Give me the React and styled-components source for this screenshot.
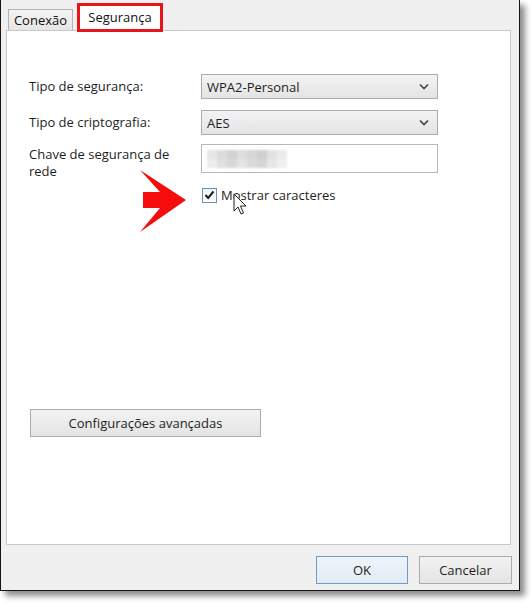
import React from "react";
import styled, { createGlobalStyle } from "styled-components";

const GlobalStyle = createGlobalStyle`
  html, body {
    margin: 0;
    padding: 0;
    background: #ffffff;
  }
  body {
    font-family: "Open Sans", "Noto Sans", sans-serif;
    font-size: 13px;
    color: #1e1e1e;
  }
`;

// --- Styled Components ---

const Page = styled.div`
  position: relative;
  width: 531px;
  height: 604px;
  overflow: hidden;
  background: #ffffff;
`;

const Window = styled.div`
  width: 518px;
  height: 590px;
  background: #f0f0f0;
  border: 1px solid #151515;
  border-top: none;
  box-shadow: 5px 5px 6px rgba(0, 0, 0, 0.45);
  display: flex;
  flex-direction: column;
`;

const TabStrip = styled.div`
  height: 30px;
  display: flex;
  align-items: flex-end;
  padding-left: 7px;
  gap: 4px;
`;

const Tab = styled.div`
  position: relative;
  z-index: 1;
  box-sizing: border-box;
  display: flex;
  align-items: center;
  justify-content: center;
  height: ${(p) => (p.$active ? "29px" : "21px")};
  width: ${(p) => (p.$active ? "86px" : "65px")};
  margin-bottom: ${(p) => (p.$active ? "-2px" : "0")};
  padding-top: ${(p) => (p.$active ? "0" : "1px")};
  background: ${(p) => (p.$active ? "#ffffff" : "linear-gradient(#f3f3f3, #e6e6e6)")};
  border: ${(p) => (p.$active ? "3px solid #e8141c" : "1px solid #b4b4b4")};
  border-bottom: ${(p) => (p.$active ? "3px solid #e8141c" : "none")};
  color: #111;
  font-size: 13px;
  line-height: 1;
  white-space: nowrap;
`;

const Panel = styled.div`
  position: relative;
  height: 515px;
  margin: 0 8px 0 5px;
  background: #ffffff;
  border: 1px solid #c9c9c9;
  padding: 43px 0 0 22px;
  box-sizing: border-box;
`;

const FormRow = styled.div`
  display: flex;
  align-items: ${(p) => (p.$top ? "flex-start" : "center")};
  margin-bottom: ${(p) => p.$gap || 0}px;
`;

const Label = styled.div`
  width: 172px;
  flex: none;
  line-height: 17px;
  padding-right: 8px;
  box-sizing: border-box;
  padding-top: ${(p) => (p.$top ? "2px" : "0")};
`;

const Select = styled.div`
  box-sizing: border-box;
  width: 237px;
  height: 25px;
  border: 1px solid #acacac;
  background: linear-gradient(#f3f3f3, #e4e4e4);
  display: flex;
  align-items: center;
  justify-content: space-between;
  padding: 0 8px 0 5px;
`;

const TextBox = styled.div`
  box-sizing: border-box;
  width: 237px;
  height: 29px;
  border: 1px solid #b7b7b7;
  background: #ffffff;
  display: flex;
  align-items: center;
  padding-left: 5px;
`;

const Pixels = styled.div`
  display: grid;
  grid-template-columns: repeat(8, 10px);
  grid-template-rows: 9px 9px;
  filter: blur(1px);
`;

const Pixel = styled.span`
  display: block;
  background: ${(p) => p.$c};
`;

const CheckRow = styled.label`
  display: flex;
  align-items: center;
  gap: 4px;
  height: 18px;
  margin: 6px 0 0 173px;
`;

const CheckBox = styled.span`
  box-sizing: border-box;
  width: 15px;
  height: 15px;
  border: 1px solid #6f8db5;
  background: linear-gradient(#eef4fb, #ffffff);
  display: flex;
  align-items: center;
  justify-content: center;
`;

const Button = styled.div`
  box-sizing: border-box;
  display: flex;
  align-items: center;
  justify-content: center;
  width: ${(p) => p.$w}px;
  height: ${(p) => p.$h || 28}px;
  border: 1px solid ${(p) => (p.$primary ? "#6f9ccc" : "#acacac")};
  background: ${(p) =>
    p.$primary ? "linear-gradient(#eef4fa, #e2ebf4)" : "linear-gradient(#f2f2f2, #e4e4e4)"};
  color: #1e1e1e;
  font-size: 13px;
`;

const AdvancedButton = styled(Button)`
  margin: 205px 0 0 1px;
`;

const Footer = styled.div`
  display: flex;
  justify-content: flex-end;
  gap: 11px;
  padding: 11px 7px 0 0;
`;

const Overlay = styled.svg`
  position: absolute;
  left: ${(p) => p.$x}px;
  top: ${(p) => p.$y}px;
  pointer-events: none;
`;

const Chevron = () => (
  <svg width="10" height="7" viewBox="0 0 10 7">
    <path d="M1 1.5 L5 5.5 L9 1.5" fill="none" stroke="#444" strokeWidth="1.6" />
  </svg>
);

const PIXELS = [
  "#e6e6e6", "#dcdcdc", "#d2d2d2", "#dedede", "#d6d6d6", "#cfcfcf", "#e2e2e2", "#ebebeb",
  "#ececec", "#e0e0e0", "#d8d8d8", "#e4e4e4", "#dbdbdb", "#d5d5d5", "#e6e6e6", "#efefef",
];

export default function App() {
  return (
    <Page>
      <GlobalStyle />
      <Window>
        <TabStrip>
          <Tab>Conexão</Tab>
          <Tab $active>Segurança</Tab>
        </TabStrip>
        <Panel>
          <FormRow $gap={11}>
            <Label>Tipo de segurança:</Label>
            <Select>
              <span>WPA2-Personal</span>
              <Chevron />
            </Select>
          </FormRow>
          <FormRow $gap={9}>
            <Label>Tipo de criptografia:</Label>
            <Select>
              <span>AES</span>
              <Chevron />
            </Select>
          </FormRow>
          <FormRow $top>
            <Label $top>Chave de segurança de rede</Label>
            <TextBox>
              <Pixels>
                {PIXELS.map((c, i) => (
                  <Pixel key={i} $c={c} />
                ))}
              </Pixels>
            </TextBox>
          </FormRow>
          <CheckRow>
            <CheckBox>
              <svg width="11" height="10" viewBox="0 0 11 10">
                <path d="M1.5 5 L4.2 8 L9.5 1.5" fill="none" stroke="#1d1d1d" strokeWidth="2" />
              </svg>
            </CheckBox>
            <span>Mostrar caracteres</span>
          </CheckRow>
          <AdvancedButton $w={231} $h={28}>
            Configurações avançadas
          </AdvancedButton>
        </Panel>
        <Footer>
          <Button $primary $w={92}>OK</Button>
          <Button $w={93}>Cancelar</Button>
        </Footer>
      </Window>

      {/* annotation arrow */}
      <Overlay $x={138} $y={168} width="50" height="66" viewBox="0 0 50 66">
        <path d="M2 2 L48 32 L2 64 L22 40 L5 40 L5 24 L22 24 Z" fill="#f50d0d" />
      </Overlay>

      {/* mouse cursor */}
      <Overlay $x={233} $y={193} width="14" height="24" viewBox="0 0 14 24">
        <path
          d="M1 1 L1 18 L5 14 L8 21 L10.5 20 L7.5 13 L13 13 Z"
          fill="#ffffff"
          stroke="#222"
          strokeWidth="1"
          strokeLinejoin="round"
        />
      </Overlay>
    </Page>
  );
}
